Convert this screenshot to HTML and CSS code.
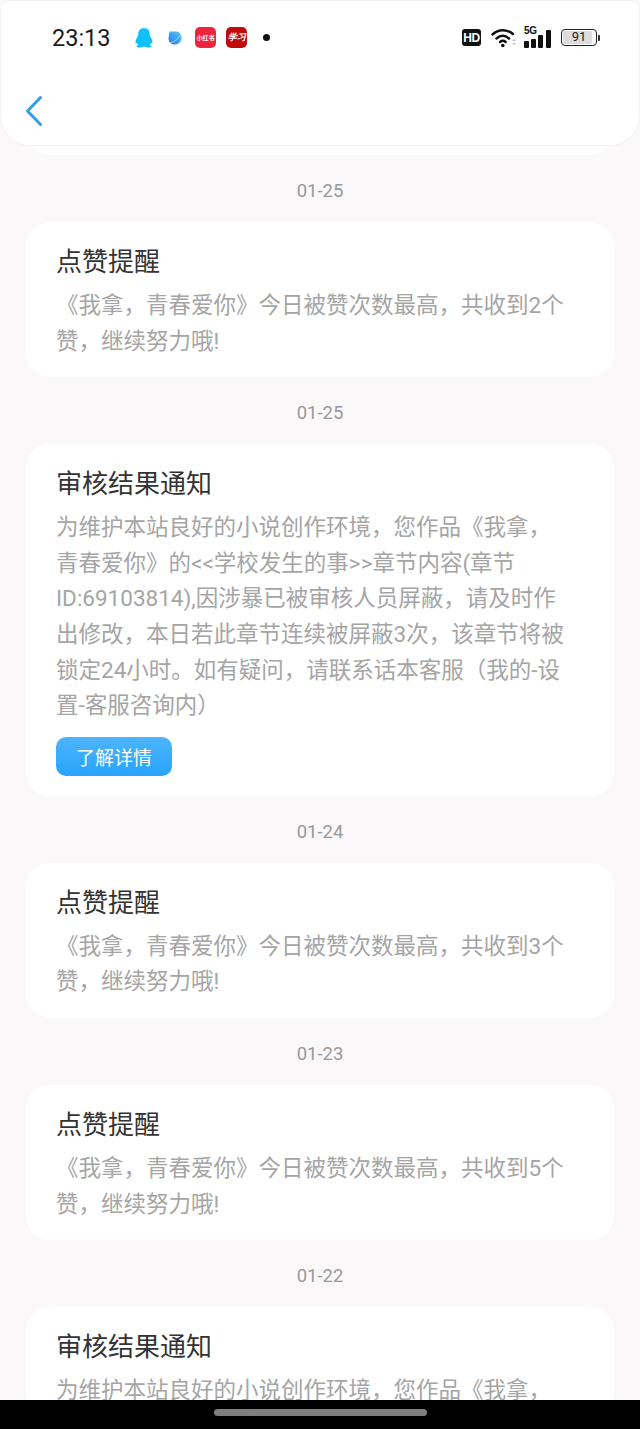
FILE: index.html
```html
<!DOCTYPE html>
<html lang="zh">
<head>
<meta charset="utf-8">
<title>消息</title>
<link rel="stylesheet" href="styles.css">
</head>
<body>
<div class="screen">
  <header class="top">
    <div class="status">
      <span class="time">23:13</span>
      <div class="apps">
        <svg class="app" width="20" height="22" viewBox="0 0 20 22"><path fill="#10c0fb" d="M10 1c3.700 0 5.800 2.800 5.800 6.300 0 1 .1 1.700.6 2.500.9 1.500 2.300 3.600 2.100 5.900-.1 1-.7 1-1.500.1-.2.900-.6 1.600-1.200 2.200 1 .4 1.700.9 1.700 1.400 0 .7-2.200 1.100-4.200 1-1.300 0-2.100-.6-3.300-.6s-2 .6-3.300.6c-2 .1-4.200-.3-4.200-1 0-.5.700-1 1.700-1.400-.6-.6-1-1.300-1.200-2.200-.8.900-1.400.9-1.500-.1-.2-2.300 1.200-4.400 2.100-5.900.5-.8.6-1.500.6-2.500C4.200 3.800 6.300 1 10 1z"/></svg>
        <svg class="app planet" width="16" height="16" viewBox="0 0 16 16"><defs><linearGradient id="pl" x1="0" y1="1" x2="1" y2="0"><stop offset="0" stop-color="#2a78e6"/><stop offset="1" stop-color="#5cc6f5"/></linearGradient></defs><path d="M2.500 1.500h6c3.500 0 6 2.500 6 6 0 4-2.500 7-7 7-3.500 0-6-2.500-6-6z" fill="url(#pl)"/><path d="M2 12.500c4 .6 8.500-2.500 12-8.500" fill="none" stroke="#bfe6fb" stroke-width=".8"/></svg>
        <span class="badge red">小红书</span>
        <span class="badge crimson">学习</span>
        <span class="dot"></span>
      </div>
      <div class="sys">
        <span class="hd">HD</span>
        <svg class="wifi" width="26" height="20" viewBox="0 0 26 20"><g fill="none" stroke="#111" stroke-width="2.400" stroke-linecap="round"><path d="M1.500 6.500C7.500 1 16 1 22 6"/><path d="M5.500 10.500c3.800-3.300 8.500-3.300 12.500 0"/><path d="M9 14c2-1.600 3.800-1.600 5.700 0"/></g><circle cx="11.800" cy="17.500" r="1.800" fill="#111"/><path d="M21 13l2-2 2 2zM21 15l2 2 2-2z" fill="#bbb"/></svg>
        <span class="signal">
          <span class="fiveg">5G</span>
          <span class="bars"><i class="b1"></i><i class="b2"></i><i class="b3"></i><i class="b4"></i></span>
        </span>
        <span class="battery"><span class="fill"></span><span class="lvl">91</span></span><span class="cap"></span>
      </div>
    </div>
    <svg class="back" width="20" height="32" viewBox="0 0 20 32"><path d="M16.500 2.500L3.500 16 16.500 29.500" fill="none" stroke="#2f9fe6" stroke-width="3" stroke-linecap="round" stroke-linejoin="round"/></svg>
  </header>

  <main class="feed">
    <div class="peek"></div>

    <p class="date">01-25</p>
    <section class="card">
      <h2>点赞提醒</h2>
      <p class="body">《我拿，青春爱你》今日被赞次数最高，共收到2个赞，继续努力哦!</p>
    </section>

    <p class="date">01-25</p>
    <section class="card">
      <h2>审核结果通知</h2>
      <p class="body">为维护本站良好的小说创作环境，您作品《我拿，青春爱你》的&lt;&lt;学校发生的事&gt;&gt;章节内容(章节ID:69103814),因涉暴已被审核人员屏蔽，请及时作出修改，本日若此章节连续被屏蔽3次，该章节将被锁定24小时。如有疑问，请联系话本客服（我的-设置-客服咨询内）</p>
      <a class="more">了解详情</a>
    </section>

    <p class="date">01-24</p>
    <section class="card">
      <h2>点赞提醒</h2>
      <p class="body">《我拿，青春爱你》今日被赞次数最高，共收到3个赞，继续努力哦!</p>
    </section>

    <p class="date">01-23</p>
    <section class="card">
      <h2>点赞提醒</h2>
      <p class="body">《我拿，青春爱你》今日被赞次数最高，共收到5个赞，继续努力哦!</p>
    </section>

    <p class="date">01-22</p>
    <section class="card">
      <h2>审核结果通知</h2>
      <p class="body">为维护本站良好的小说创作环境，您作品《我拿，</p>
    </section>
  </main>

  <footer class="nav"><span class="pill"></span></footer>
</div>
</body>
</html>
```
FILE: styles.css
```css
* { box-sizing: border-box; }
html, body { margin: 0; padding: 0; }
body { font-family: "Noto Sans CJK SC", "Noto Sans", sans-serif; background: #faf8f9; }
.screen { width: 640px; height: 1429px; overflow: hidden; display: flex; flex-direction: column; background: #faf8f9; }

.top { position: relative; z-index: 2; flex: none; height: 146px; background: #fff; border-radius: 8px 8px 30px 30px; border: 1px solid #f3f2f3; border-top-color: #f1f1f1; padding: 0 0 0 25px; }
.status { height: 73px; display: flex; align-items: center; padding-left: 26px; }
.time { font-family: "Roboto", sans-serif; font-size: 23.500px; color: #1a1a1a; width: 82px; }
.apps { display: flex; align-items: center; width: 328px; }
.app { display: block; flex: none; }
.planet { margin-left: 13px; }
.badge { flex: none; width: 21px; height: 21px; border-radius: 5px; color: #fff; font-size: 6px; font-weight: 700; display: flex; align-items: center; justify-content: center; line-height: 1; white-space: nowrap; overflow: hidden; }
.red { background: #f0243f; margin-left: 12px; }
.crimson { background: #c00a0c; font-family: "Liberation Serif", serif; font-style: italic; font-size: 9px; margin-left: 10px; }
.dot { width: 7px; height: 7px; border-radius: 50%; background: #111; margin-left: 16px; }
.sys { display: flex; align-items: center; position: relative; }
.hd { font-family: "Liberation Sans", sans-serif; font-weight: 700; font-size: 12px; line-height: 1; color: #fff; background: #111; border-radius: 3px; width: 19px; height: 17px; display: flex; align-items: center; justify-content: center; margin-right: 10px; letter-spacing: -.5px; }
.wifi { display: block; margin-right: 7px; }
.signal { position: relative; display: block; width: 28px; height: 20px; margin-right: 9px; }
.fiveg { position: absolute; left: 0; top: -2px; font-family: "Liberation Sans", sans-serif; font-weight: 700; font-size: 10px; line-height: 10px; color: #111; letter-spacing: -.3px; }
.bars { position: absolute; inset: 0; display: flex; align-items: flex-end; gap: 2.500px; }
.bars i { display: block; width: 4.500px; background: #111; border-radius: 1px; }
.b1 { height: 7px; } .b2 { height: 9px; } .b3 { height: 13px; } .b4 { height: 18px; margin-left: 1px; }
.battery { position: relative; width: 36px; height: 17px; border: 1.500px solid #222; border-radius: 4px; background: #fff; display: block; overflow: hidden; }
.fill { position: absolute; left: 1px; top: 1px; bottom: 1px; width: 29px; background: #dcdcdc; border-radius: 2px; }
.lvl { position: relative; display: block; text-align: center; font-family: "Roboto", sans-serif; font-size: 13px; line-height: 14px; color: #222; }
.cap { display: block; width: 2px; height: 6px; background: #333; border-radius: 0 1px 1px 0; margin-left: 1px; }
.back { display: block; margin-top: 21px; margin-left: -2px; }

.feed { flex: 1; margin-top: -31px; min-height: 0; overflow: hidden; }
.peek { height: 40px; margin: 0 26px; background: #fff; border-radius: 0 0 24px 24px; }
.date { margin: 0; height: 67px; padding-top: 21px; text-align: center; font-family: "Roboto", sans-serif; font-size: 18.500px; line-height: 31px; color: #999; }
.card { margin: 0 26px; background: #fff; border-radius: 24px; padding: 18px 46px 18px 30px; }
.card h2 { margin: 0; font-size: 26px; font-weight: 400; line-height: 40px; color: #333; white-space: nowrap; }
.body { margin: 8px 0 0 0; font-family: "Roboto", "Noto Sans CJK SC", sans-serif; font-size: 22.500px; line-height: 35.600px; color: #a5a5a5; }
.more { display: block; width: 116px; height: 39px; margin: 13px 0 2px; border-radius: 10px; background: linear-gradient(#4db4fb, #28a3fb); color: #fff; font-size: 19px; line-height: 39px; text-align: center; }

.nav { flex: none; height: 29px; background: #000; display: flex; justify-content: center; padding-top: 9px; position: relative; z-index: 3; }
.pill { width: 213px; height: 7px; background: #7f7f7f; border-radius: 4px; }
```
